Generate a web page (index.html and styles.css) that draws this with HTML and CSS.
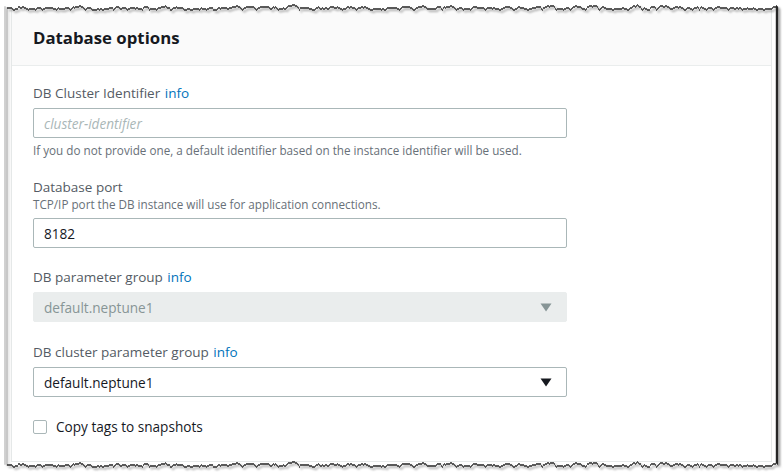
FILE: index.html
```html
<!DOCTYPE html>
<html lang="en">
<head>
<meta charset="utf-8">
<title>Database options</title>
<link rel="stylesheet" href="styles.css">
</head>
<body>
<div class="page">
  <section class="card">
    <header class="card-header">
      <h2 class="card-title">Database options</h2>
    </header>
    <div class="card-body">
      <div class="field">
        <div class="label">DB Cluster Identifier <a class="info" href="#">info</a></div>
        <div class="input"><span class="placeholder">cluster-identifier</span></div>
        <div class="hint">If you do not provide one, a default identifier based on the instance identifier will be used.</div>
      </div>
      <div class="field">
        <div class="label">Database port</div>
        <div class="desc">TCP/IP port the DB instance will use for application connections.</div>
        <div class="input"><span class="value">8182</span></div>
      </div>
      <div class="field field-wide">
        <div class="label">DB parameter group <a class="info" href="#">info</a></div>
        <div class="select select-disabled">
          <span class="value">default.neptune1</span>
          <svg class="caret" width="12" height="9" viewBox="0 0 12 9"><path d="M0.5 0.5 H11.5 L6 8.5 Z"/></svg>
        </div>
      </div>
      <div class="field">
        <div class="label">DB cluster parameter group <a class="info" href="#">info</a></div>
        <div class="select">
          <span class="value">default.neptune1</span>
          <svg class="caret" width="12" height="9" viewBox="0 0 12 9"><path d="M0.5 0.5 H11.5 L6 8.5 Z"/></svg>
        </div>
      </div>
      <label class="check">
        <span class="box"></span>
        <span class="check-label">Copy tags to snapshots</span>
      </label>
    </div>
  </section>

  <svg class="torn" width="783" height="472" viewBox="0 0 783 472" aria-hidden="true">
    <defs>
      <filter id="jag" filterUnits="userSpaceOnUse" x="-30" y="-30" width="843" height="532">
        <feTurbulence type="turbulence" baseFrequency="0.07 0" numOctaves="3" seed="7" result="noise"/>
        <feDisplacementMap in="SourceGraphic" in2="noise" scale="8" xChannelSelector="G" yChannelSelector="R"/>
      </filter>
      <filter id="jagShadow" filterUnits="userSpaceOnUse" x="-30" y="-30" width="843" height="532">
        <feTurbulence type="turbulence" baseFrequency="0.07 0" numOctaves="3" seed="7" result="noise"/>
        <feDisplacementMap in="SourceGraphic" in2="noise" scale="8" xChannelSelector="G" yChannelSelector="R" result="disp"/>
        <feDropShadow in="disp" dx="2" dy="2" stdDeviation="1" flood-color="#7a7a7a" flood-opacity="0.8"/>
      </filter>
    </defs>
    <g filter="url(#jag)">
      <path fill="#ffffff" fill-rule="evenodd" d="M-20 -20 H803 V492 H-20 Z M3.5 6 H775.5 V463 H3.5 Z"/>
    </g>
    <g filter="url(#jagShadow)">
      <path fill="none" stroke="#262626" stroke-width="1.4" d="M3.5 6 H775.5 V463 H3.5 Z"/>
    </g>
  </svg>
</div>
</body>
</html>
```
FILE: styles.css
```css
html, body {
  margin: 0;
  padding: 0;
  background: #ffffff;
}

body {
  width: 783px;
  height: 472px;
  overflow: hidden;
  font-family: "Open Sans", "Liberation Sans", Arial, sans-serif;
  color: #16191f;
}

.page {
  position: relative;
  width: 783px;
  height: 472px;
  padding: 0 0 0 11px;
  box-sizing: border-box;
}

.card {
  width: 761px;
  height: 462px;
  box-sizing: border-box;
  border: 1px solid #e6e9e9;
  border-top: none;
  background: #ffffff;
}

.card-header {
  height: 66px;
  box-sizing: border-box;
  background: #fafafa;
  border-bottom: 1px solid #eaeded;
  padding: 25px 21px 0;
}

.card-title {
  margin: 0;
  font-size: 16.8px;
  line-height: 26px;
  font-weight: 700;
  color: #16191f;
}

.card-body {
  padding: 17px 21px 0;
  display: flex;
  flex-direction: column;
}

.field {
  display: flex;
  flex-direction: column;
  margin-bottom: 19px;
}

.field-wide {
  margin-bottom: 20px;
}

.label {
  font-size: 13.5px;
  line-height: 20px;
  color: #545b64;
  margin-bottom: 5px;
}

.info {
  color: #0073bb;
  text-decoration: none;
  margin-left: 1px;
}

.desc {
  font-size: 11.7px;
  line-height: 16px;
  color: #687078;
  margin-top: -6px;
  margin-bottom: 6px;
}

.hint {
  font-size: 11.7px;
  line-height: 16px;
  color: #687078;
  margin-top: 4px;
}

.input,
.select {
  width: 534px;
  height: 30px;
  box-sizing: border-box;
  border: 1px solid #aab7b8;
  border-radius: 2px;
  background: #ffffff;
  display: flex;
  align-items: center;
  padding: 0 10px;
  font-size: 13.6px;
}

.placeholder {
  color: #aab7b8;
  font-style: italic;
}

.value {
  color: #16191f;
}

.select {
  justify-content: space-between;
  padding-right: 14px;
}

.select .caret path {
  fill: #16191f;
}

.select-disabled {
  background: #eaeded;
  border-color: #eaeded;
}

.select-disabled .value {
  color: #879596;
}

.select-disabled .caret path {
  fill: #879596;
}

.check {
  display: flex;
  align-items: center;
  gap: 9px;
  height: 20px;
  margin-top: 1px;
}

.box {
  width: 14px;
  height: 14px;
  box-sizing: border-box;
  border: 1px solid #aab7b8;
  border-radius: 2px;
  background: #ffffff;
}

.check-label {
  font-size: 13.6px;
  line-height: 20px;
  color: #16191f;
}

.torn {
  position: absolute;
  left: 0;
  top: 0;
  pointer-events: none;
}
```
